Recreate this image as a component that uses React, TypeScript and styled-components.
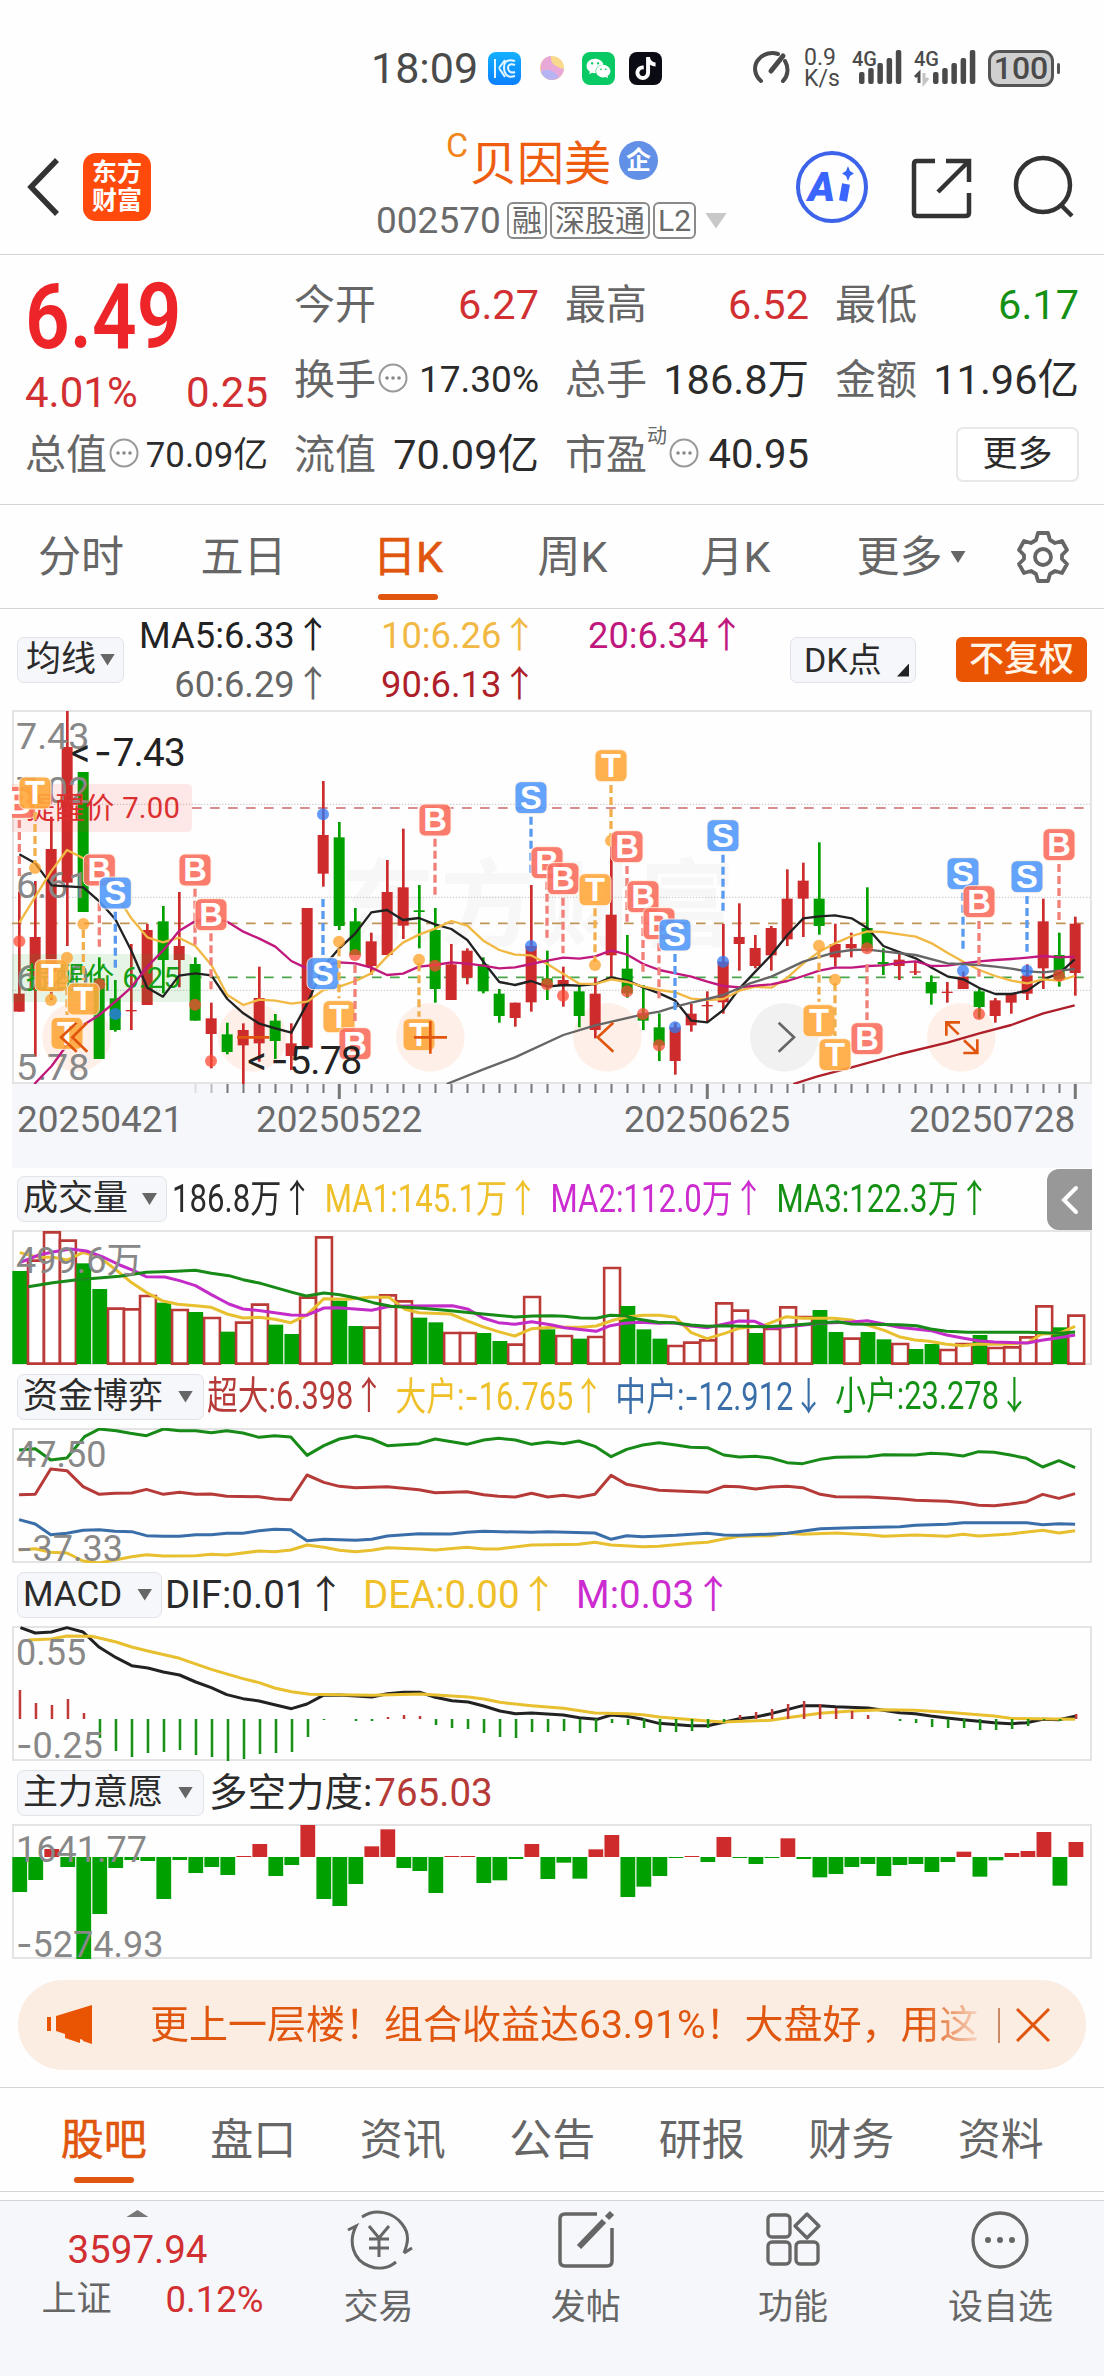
import React from "react";
import styled, { createGlobalStyle } from "styled-components";
import { FaTiktok, FaWeixin } from "react-icons/fa";

const RED = "#ce2c2c";
const GREEN = "#00a000";
const ORANGE = "#e0560f";
const FONT = 'Roboto, "Noto Sans CJK SC", sans-serif';

type Candle = [string, number, number, number, number];

// kind, high, body top, body bottom, low
const candles: Candle[] = [
  ["r", 575, 881, 935, 935],
  ["r", 543, 711, 870, 1070],
  ["r", 350, 447, 815, 900],
  ["r", 33, 141, 548, 738],
  ["g", 216, 216, 636, 636],
  ["g", 772, 835, 1077, 1077],
  ["g", 840, 895, 990, 995],
  ["r", 732, 930, 934, 990],
  ["r", 672, 690, 915, 915],
  ["g", 618, 664, 780, 880],
  ["r", 576, 738, 780, 862],
  ["g", 772, 792, 962, 962],
  ["r", 908, 955, 1002, 1105],
  ["g", 968, 1003, 1056, 1063],
  ["r", 970, 990, 1036, 1152],
  ["r", 800, 894, 1030, 1085],
  ["g", 942, 962, 1023, 1077],
  ["r", 970, 1030, 1068, 1110],
  ["r", 624, 624, 1043, 1043],
  ["r", 243, 405, 521, 560],
  ["g", 366, 412, 678, 690],
  ["g", 624, 664, 765, 765],
  ["r", 698, 724, 798, 825],
  ["r", 480, 576, 765, 765],
  ["r", 386, 562, 677, 717],
  ["g", 555, 631, 636, 745],
  ["g", 624, 690, 867, 908],
  ["r", 732, 793, 900, 900],
  ["r", 745, 752, 833, 853],
  ["g", 772, 793, 874, 880],
  ["g", 867, 881, 948, 968],
  ["r", 908, 908, 954, 980],
  ["r", 555, 738, 907, 935],
  ["g", 752, 835, 855, 900],
  ["r", 800, 840, 857, 920],
  ["g", 855, 874, 948, 982],
  ["r", 833, 881, 990, 1015],
  ["r", 440, 644, 766, 830],
  ["g", 705, 806, 880, 893],
  ["g", 855, 940, 962, 990],
  ["g", 940, 982, 1036, 1083],
  ["r", 968, 982, 1083, 1124],
  ["r", 912, 941, 976, 995],
  ["r", 874, 915, 919, 965],
  ["r", 672, 785, 907, 941],
  ["r", 610, 711, 732, 812],
  ["r", 705, 744, 798, 805],
  ["r", 678, 684, 766, 812],
  ["r", 508, 596, 718, 738],
  ["r", 488, 542, 596, 711],
  ["g", 427, 596, 678, 704],
  ["r", 671, 732, 772, 800],
  ["r", 698, 732, 745, 772],
  ["g", 562, 684, 745, 755],
  ["g", 745, 786, 793, 825],
  ["r", 760, 779, 798, 840],
  ["r", 785, 814, 818, 825],
  ["g", 826, 846, 880, 914],
  ["r", 846, 875, 879, 908],
  ["r", 815, 830, 867, 867],
  ["g", 867, 874, 921, 955],
  ["r", 894, 901, 948, 968],
  ["r", 881, 881, 908, 941],
  ["r", 793, 826, 881, 900],
  ["r", 596, 664, 805, 867],
  ["g", 698, 765, 840, 860],
  ["r", 650, 671, 819, 887],
];

const maLines = [
  {
    color: "#222",
    points:
      "58,463 106,490 155,556 250,562 298,604 346,658 394,752 442,863 489,890 537,827 586,820 634,826 682,897 730,940 778,971 826,985 874,998 922,910 970,800 1018,745 1066,700 1114,637 1161,630 1209,660 1257,654 1305,673 1354,687 1402,720 1450,785 1498,846 1545,855 1593,843 1642,860 1690,855 1738,857 1786,852 1834,832 1882,842 1930,862 1978,880 2026,902 2074,962 2122,967 2170,930 2218,866 2266,815 2314,765 2362,705 2410,655 2458,649 2505,646 2555,655 2603,685 2650,738 2700,757 2747,775 2795,803 2842,829 2890,838 2938,864 2986,882 3034,882 3082,872 3130,838 3178,820 3224,778",
  },
  {
    color: "#f1b843",
    points:
      "58,668 106,590 153,515 201,450 250,475 298,530 346,580 394,655 442,712 489,727 537,713 586,738 634,795 682,885 730,915 778,899 826,902 874,911 922,905 970,870 1018,860 1066,843 1114,820 1161,770 1209,728 1257,704 1305,686 1354,663 1402,677 1450,722 1498,750 1545,764 1593,766 1642,792 1690,822 1738,851 1786,852 1834,838 1882,846 1930,860 1978,870 2026,877 2074,896 2122,900 2170,897 2218,872 2266,860 2314,863 2362,833 2410,790 2458,755 2505,730 2555,708 2603,694 2650,696 2700,703 2747,710 2795,730 2842,758 2890,785 2938,810 2986,828 3034,842 3082,850 3130,838 3178,842 3224,828",
  },
  {
    color: "#c0187c",
    points:
      "103,1152 155,1098 201,1035 250,975 298,945 346,905 394,862 442,800 489,752 537,693 586,663 634,655 682,665 730,695 778,716 826,740 874,783 922,806 970,797 1018,787 1066,790 1114,803 1161,825 1209,821 1257,800 1305,795 1354,787 1402,791 1450,797 1498,805 1545,802 1593,792 1642,782 1690,773 1738,776 1786,769 1834,751 1882,764 1930,792 1978,810 2026,820 2074,830 2122,845 2170,858 2220,862 2266,857 2314,853 2362,843 2410,828 2458,812 2505,803 2555,803 2603,798 2650,796 2700,788 2747,784 2795,798 2842,797 2890,790 2938,784 2986,780 3034,777 3082,773 3130,768 3178,772 3224,770",
  },
  {
    color: "#666",
    points:
      "1340,1152 1450,1108 1545,1072 1690,1005 1786,976 1930,943 1978,935 2026,920 2074,908 2122,897 2170,885 2250,850 2314,830 2410,785 2505,757 2555,750 2603,749 2650,754 2747,765 2842,790 2938,795 2986,800 3034,806 3082,814 3130,817 3178,812 3224,807",
  },
  {
    color: "#ae1f2a",
    points:
      "2380,1152 2450,1130 2555,1102 2700,1062 2842,1028 2938,1000 3034,975 3130,940 3224,916",
  },
];

type Mark = {
  kind: "B" | "S" | "T";
  x: number;
  y: number;
  from: number;
  to: number;
  dot: number;
};

const m = (
  kind: Mark["kind"],
  x: number,
  y: number,
  from: number,
  to: number,
  dot: number
): Mark => ({ kind, x, y, from, to, dot });

const marks: Mark[] = [
  m("B", 58, 307, 360, 530, 724),
  m("T", 105, 279, 336, 490, 504),
  m("B", 298, 510, 610, 740, 853),
  m("S", 346, 579, 635, 805, 942),
  m("T", 153, 827, 880, 895, 900),
  m("T", 201, 1000, 790, 945, 773),
  m("T", 250, 897, 690, 840, 672),
  m("B", 585, 510, 566, 735, 914),
  m("B", 633, 644, 700, 870, 1083),
  m("S", 969, 821, 597, 765, 343),
  m("T", 1017, 950, 745, 895, 725),
  m("B", 1065, 1031, 795, 975, 765),
  m("B", 1305, 360, 416, 585, 797),
  m("T", 1257, 1004, 790, 950, 779),
  m("S", 1593, 293, 350, 520, 738),
  m("B", 1641, 488, 545, 715, 853),
  m("B", 1689, 536, 593, 760, 887),
  m("T", 1785, 569, 625, 785, 795),
  m("T", 1833, 197, 255, 410, 422),
  m("B", 1881, 440, 498, 665, 874),
  m("B", 1929, 590, 648, 815, 942),
  m("B", 1977, 671, 730, 895, 1036),
  m("S", 2025, 705, 762, 930, 982),
  m("S", 2169, 407, 464, 632, 785),
  m("T", 2457, 962, 752, 905, 737),
  m("T", 2505, 1064, 850, 1008, 839),
  m("B", 2601, 1016, 793, 960, 745),
  m("S", 2889, 521, 578, 747, 812),
  m("B", 2937, 605, 663, 830, 942),
  m("S", 3081, 530, 588, 755, 812),
  m("B", 3177, 434, 492, 660, 827),
];

const markFill = { B: "#fa6f60", S: "#549afb", T: "#ffa93c" };
const stemFill = { B: "#f08078", S: "#5a9bf0", T: "#f0b050" };
const dotFill = { B: "#fb4a36", S: "#2f78f5", T: "#ff9f24" };

const toBars = (s: string): [string, number][] =>
  s.split(" ").map((v) => [v[0], Number(v.slice(1))]);

const volumeBars = toBars(
  "g633 r600 r515 r540 g610 g687 r744 r746 r706 g728 r748 g756 r772 g815 r786 r732 g794 g822 r711 r530 g722 g798 r801 r704 r722 g773 g787 r817 r817 g819 g843 r852 r709 g808 r826 g836 r829 r622 g738 g808 g836 r856 r846 r839 r728 r750 g819 r805 r740 r769 g750 g816 r834 g816 g838 r850 g867 g852 r868 r850 g825 r862 r860 r830 r737 g802 r765"
);

const macdBars = toBars(
  "r390 r429 r435 r417 r459 g534 g573 g591 g579 g576 g570 g585 g591 g603 g597 g582 g579 g576 g531 g480 g477 g483 g483 r471 r465 r468 g495 g504 g507 g519 g531 g534 g516 g516 g513 g519 g516 g489 g495 g504 g516 g516 g513 g504 g486 r465 r456 r447 r432 r423 r432 r444 r453 r465 g477 g483 g489 g501 g504 g504 g510 g510 g507 g498 g480 g483 r462"
);

const forceBars = toBars(
  "g396 g360 r267 g321 g597 g462 g324 g300 g303 g417 g300 g339 g321 g345 r288 r252 g348 g315 r195 g417 g438 g372 r259 r208 g324 g333 g399 r288 r288 g369 g361 g297 r252 g357 g308 g356 r268 r225 g411 g380 g348 g294 r288 g306 r231 g294 g312 g294 r235 g297 g352 g342 g321 g312 g348 g315 g312 g336 g306 r275 g350 g301 r279 r273 r216 g377 r246"
);

const volumeLines = [
  {
    color: "#e8bf2f",
    points:
      "56,578 110,592 150,592 190,600 235,578 280,590 330,630 370,665 415,697 460,722 505,733 555,737 600,742 645,762 690,774 735,772 780,778 826,788 870,766 920,716 985,718 1050,712 1105,712 1150,748 1190,758 1280,762 1325,782 1370,800 1415,815 1462,828 1510,806 1568,802 1648,802 1693,798 1743,780 1783,770 1828,766 1873,766 1918,772 1963,818 2008,836 2058,820 2098,805 2168,797 2233,770 2278,775 2368,775 2418,780 2468,797 2513,812 2553,830 2598,840 2638,844 2688,853 2733,857 2778,852 2818,853 2868,852 2918,848 2958,822 3008,820 3053,799",
  },
  {
    color: "#c32cc8",
    points:
      "56,608 110,585 150,576 200,567 245,573 290,590 340,615 380,632 415,650 468,651 510,662 555,677 600,704 650,732 690,747 740,752 826,765 870,766 920,744 960,743 1055,751 1100,740 1150,738 1285,737 1330,748 1372,774 1415,788 1462,793 1510,785 1568,795 1603,803 1693,814 1733,797 1773,790 1818,787 1873,790 1913,788 1963,798 2008,803 2058,792 2098,783 2143,784 2188,805 2278,796 2328,790 2418,786 2463,782 2513,793 2553,802 2643,812 2688,825 2733,834 2778,842 2823,846 2918,849 2958,841 3008,833 3053,825",
  },
  {
    color: "#178a17",
    points:
      "80,680 150,668 220,659 340,649 415,637 500,634 555,631 600,640 650,647 690,659 740,670 830,697 870,708 920,699 965,704 1015,715 1060,728 1110,739 1200,745 1280,752 1372,762 1462,771 1515,768 1568,767 1603,769 1648,774 1693,775 1733,766 1773,767 1813,778 1868,787 1913,788 1963,795 2008,799 2058,797 2168,800 2233,797 2328,789 2378,785 2418,792 2553,794 2603,797 2643,807 2688,814 2748,817 2918,817 3008,820 3053,816",
  },
];

const fundLines = [
  {
    color: "#178a17",
    points:
      "27,240 50,236 72,270 95,264 120,200 141,177 165,182 185,190 208,197 232,177 255,182 278,182 300,188 322,182 345,189 368,202 390,197 413,201 436,256 460,227 482,207 505,198 528,207 550,227 595,221 618,207 663,223 687,210 708,205 732,210 755,223 778,216 800,221 822,213 845,229 868,260 890,238 913,225 936,218 960,225 981,232 1005,233 1028,255 1050,261 1073,259 1095,264 1118,278 1140,281 1165,268 1187,262 1233,260 1255,254 1300,255 1322,250 1345,252 1368,258 1390,245 1412,247 1435,255 1458,265 1481,291 1504,272 1527,293",
  },
  {
    color: "#b53a38",
    points:
      "27,374 50,373 72,297 95,302 118,350 141,373 163,370 187,369 208,358 232,373 255,367 278,373 300,372 322,379 368,380 390,387 413,389 436,315 460,337 482,349 505,353 550,350 595,359 618,368 663,365 687,374 708,379 732,381 755,370 778,381 800,376 822,382 845,373 868,316 890,343 913,352 936,361 1005,367 1028,349 1050,350 1073,357 1095,351 1118,349 1140,353 1165,373 1187,380 1233,381 1278,386 1300,391 1345,394 1368,398 1390,406 1412,407 1435,402 1458,395 1481,373 1504,385 1527,371",
  },
  {
    color: "#e8bf2f",
    points:
      "27,540 50,536 72,547 95,549 118,573 141,579 163,570 187,560 208,554 232,558 278,557 300,553 322,555 368,543 390,545 413,540 436,525 460,532 482,541 505,545 528,541 550,533 595,537 618,540 663,532 687,537 708,537 755,525 822,523 845,517 868,525 913,530 936,529 981,520 1005,517 1028,507 1050,499 1095,497 1118,490 1140,493 1187,489 1233,494 1255,499 1300,495 1345,499 1368,493 1390,498 1435,492 1481,481 1504,489 1527,482",
  },
  {
    color: "#3a6ea8",
    points:
      "27,449 50,462 72,494 95,490 118,481 141,479 163,484 187,485 208,497 232,499 255,499 278,494 300,494 322,490 345,490 368,482 390,478 413,479 436,512 460,508 505,511 528,508 550,498 595,491 640,492 663,487 687,484 755,487 778,485 845,489 868,508 890,497 913,500 960,496 1005,490 1028,495 1050,496 1118,490 1165,476 1210,473 1278,470 1300,466 1345,463 1368,458 1458,458 1481,464 1504,461 1527,463",
  },
];

const macdLines = [
  {
    color: "#222",
    points:
      "29,203 50,219 73,216 95,203 118,216 141,262 165,293 187,317 210,324 232,336 255,345 278,366 300,383 322,404 345,416 368,423 390,434 414,446 436,432 459,406 482,405 528,411 550,401 573,397 597,397 618,412 642,422 665,426 687,438 710,453 732,461 755,459 800,465 823,473 848,478 868,465 890,469 913,478 936,490 981,497 1005,497 1028,487 1050,476 1073,471 1095,461 1118,449 1140,437 1165,437 1187,440 1233,444 1278,458 1300,461 1322,468 1345,474 1368,479 1412,488 1435,491 1458,488 1481,478 1504,479 1527,469",
  },
  {
    color: "#e8bf2f",
    points:
      "40,240 73,237 95,228 130,229 141,234 165,246 187,261 210,273 255,295 300,328 345,356 368,368 390,384 414,395 440,403 482,404 528,406 597,402 665,411 687,417 710,427 755,437 800,445 845,459 890,461 913,464 936,471 1005,483 1028,486 1095,481 1118,473 1165,460 1210,453 1255,449 1300,451 1345,457 1412,468 1435,475 1527,478",
  },
];

const GlobalStyle = createGlobalStyle`
  * {
    box-sizing: border-box;
  }
  body {
    margin: 0;
    background: #fff;
    font-family: ${FONT};
  }
`;

const Page = styled.div`
  width: 1104px;
  height: 2376px;
  display: flex;
  flex-direction: column;
  background: #fefefe;
  color: #2b2b2b;
  white-space: nowrap;
  overflow: hidden;
`;

const StatusBar = styled.div`
  display: flex;
  align-items: center;
  height: 95px;
  padding: 41px 44px 0 371px;
  color: #4a4a4a;
`;

const Clock = styled.span`
  width: 117px;
  font-size: 43px;
  line-height: 54px;
`;

const AppTile = styled.span<{ $bg: string }>`
  display: flex;
  align-items: center;
  justify-content: center;
  width: 33px;
  height: 33px;
  margin-right: 14px;
  border-radius: 8px;
  background: ${(p) => p.$bg};
  color: #fff;
  svg {
    display: block;
  }
`;

const StatusRight = styled.div`
  display: flex;
  align-items: center;
  margin-left: auto;
`;

const NetSpeed = styled.div`
  width: 48px;
  margin-left: 13px;
  font-size: 23px;
  line-height: 21px;
`;

const Battery = styled.div`
  position: relative;
  width: 66px;
  height: 37px;
  margin-left: 12px;
  margin-right: 6px;
  border: 3px solid #555;
  border-radius: 11px;
  background: #d0d0d0;
  font-size: 32px;
  line-height: 31px;
  font-weight: 500;
  text-align: center;
  &::after {
    content: "";
    position: absolute;
    right: -9px;
    top: 10px;
    width: 3px;
    height: 11px;
    border-radius: 2px;
    background: #555;
  }
`;

const Header = styled.header`
  display: flex;
  align-items: center;
  height: 160px;
  padding: 24px 27px 0;
  border-bottom: 1px solid #d5d5d5;
`;

const LogoTile = styled.div`
  width: 68px;
  height: 68px;
  margin-left: 22px;
  padding-top: 6px;
  border-radius: 13px;
  background: #ff4a0c;
  color: #fff;
  font-size: 25px;
  font-weight: 700;
  line-height: 28px;
  text-align: center;
`;

const TitleBlock = styled.div`
  width: 375px;
  height: 134px;
  margin: -24px 0 0 225px;
  padding-top: 22px;
`;

const TitleLine = styled.div`
  display: flex;
  align-items: center;
  height: 60px;
  padding-left: 70px;
  color: #ee5c10;
  font-size: 47px;
`;

const SupC = styled.span`
  align-self: flex-start;
  width: 24px;
  margin-top: -2px;
  color: #f08519;
  font-size: 34px;
  line-height: 34px;
`;

const CompanyBadge = styled.span`
  width: 39px;
  height: 39px;
  margin: 2px 0 0 8px;
  border-radius: 50%;
  background: #6290e6;
  color: #fff;
  font-size: 25px;
  font-weight: 700;
  line-height: 40px;
  text-align: center;
`;

const CodeLine = styled.div`
  display: flex;
  align-items: center;
  height: 56px;
  margin-top: 3px;
  color: #6a6a6a;
  font-size: 37px;
  & > span:first-child {
    width: 131px;
  }
`;

const TagBox = styled.span`
  height: 37px;
  margin-right: 3px;
  padding: 0 3px;
  border: 2px solid #8a8a8a;
  border-radius: 6px;
  font-size: 30px;
  line-height: 34px;
`;

const HeaderIcons = styled.svg`
  margin: 0 2px 0 auto;
`;

const Caret = styled.i<{
  $w?: number;
  $h?: number;
  $color?: string;
  $left?: number;
  $up?: boolean;
}>`
  width: ${(p) => p.$w ?? 15}px;
  height: ${(p) => p.$h ?? 12}px;
  margin-left: ${(p) => p.$left ?? 0}px;
  background: ${(p) => p.$color ?? "#666"};
  clip-path: ${(p) =>
    p.$up
      ? "polygon(50% 0, 100% 100%, 0 100%)"
      : "polygon(0 0, 100% 0, 50% 100%)"};
`;

const QuotePanel = styled.section`
  display: grid;
  grid-template-columns: 243px 245px 244px 244px;
  grid-template-rows: repeat(3, 75px);
  column-gap: 26px;
  height: 250px;
  padding: 12px 0 0 25px;
  border-bottom: 1px solid #d5d5d5;
`;

const PriceBlock = styled.div`
  grid-row: 1 / span 2;
  color: #d12f31;
`;

const Price = styled.div`
  height: 101px;
  color: #ee2528;
  font-size: 90px;
  font-weight: 600;
  line-height: 102px;
  transform: scaleX(0.87);
  transform-origin: left;
`;

const Change = styled.div`
  display: flex;
  justify-content: space-between;
  font-size: 42px;
  line-height: 50px;
`;

const QuoteCell = styled.div`
  display: flex;
  align-items: center;
  font-size: 41px;
  line-height: 50px;
`;

const CellLabel = styled.span`
  color: #666;
`;

const CellValue = styled.span<{ $color?: string; $size?: number }>`
  margin-left: auto;
  color: ${(p) => p.$color ?? "#2b2b2b"};
  font-size: ${(p) => p.$size ?? 41.5}px;
`;

const Superscript = styled.span`
  align-self: flex-start;
  margin-top: -6px;
  color: #666;
  font-size: 20px;
`;

const MoreButton = styled.button`
  width: 123px;
  height: 55px;
  margin-left: auto;
  border: 2px solid #e8e8e8;
  border-radius: 7px;
  background: #fff;
  color: #2b2b2b;
  font-family: inherit;
  font-size: 35px;
  line-height: 46px;
`;

const PeriodTabs = styled.nav`
  display: flex;
  height: 104px;
  border-bottom: 1px solid #d5d5d5;
`;

const Tab = styled.div<{ $active?: boolean; $width: number }>`
  display: flex;
  flex-direction: column;
  align-items: center;
  width: ${(p) => p.$width}px;
  color: ${(p) => (p.$active ? ORANGE : "#666")};
  font-size: 43px;
  -webkit-text-stroke: ${(p) => (p.$active ? 0.6 : 0)}px;
  & > span {
    display: flex;
    align-items: center;
    height: 89px;
    padding-top: 15px;
    line-height: 60px;
  }
  &::after {
    content: "";
    width: 60px;
    height: 6px;
    border-radius: 3px;
    background: ${(p) => (p.$active ? ORANGE : "transparent")};
  }
`;

const MaBar = styled.div`
  display: flex;
  align-items: center;
  height: 101px;
  padding: 0 17px;
`;

const Picker = styled.div<{ $width: number; $gap?: number }>`
  display: flex;
  align-items: center;
  flex: none;
  width: ${(p) => p.$width}px;
  height: 46px;
  padding-left: ${(p) => p.$gap ?? 5}px;
  border: 1px solid #e0e3e8;
  border-radius: 7px;
  background: #f6f7fa;
  font-size: 35px;
  line-height: 44px;
`;

const MaGrid = styled.div`
  display: grid;
  grid-template-columns: 192px 157px 158px;
  grid-template-rows: 49px 49px;
  column-gap: 50px;
  width: 651px;
  margin-left: 15px;
  font-size: 36.3px;
  line-height: 50px;
`;

const MaText = styled.span<{ $color: string; $end?: boolean }>`
  color: ${(p) => p.$color};
  text-align: ${(p) => (p.$end ? "right" : "left")};
`;

const DkPicker = styled(Picker)`
  position: relative;
  padding-left: 13px;
  font-size: 34px;
  &::after {
    content: "";
    position: absolute;
    right: 6px;
    bottom: 5px;
    width: 12px;
    height: 13px;
    background: #222;
    clip-path: polygon(100% 0, 100% 100%, 0 100%);
  }
`;

const AdjustButton = styled.div`
  width: 131px;
  height: 45px;
  margin-left: 40px;
  border-radius: 6px;
  background: #ea5504;
  color: #fff4e6;
  font-size: 35px;
  font-weight: 500;
  line-height: 46px;
  text-align: center;
`;

const ChartFrame = styled.div<{ $height: number }>`
  position: relative;
  flex: none;
  width: 1080px;
  height: ${(p) => p.$height}px;
  margin-left: 12px;
  box-shadow: inset 0 0 0 2px #e4e4e4;
  & > svg {
    display: block;
    width: 100%;
    height: 100%;
  }
`;

const AxisLabel = styled.span<{ $top: number }>`
  position: absolute;
  left: 4px;
  top: ${(p) => p.$top}px;
  color: #888;
  font-size: 36px;
  line-height: 40px;
`;

// wide dash in front of negative values
const Minus = styled.span`
  font-family: Inter, sans-serif;
`;

const DateAxis = styled.div`
  flex: none;
  width: 1080px;
  height: 84px;
  margin-left: 12px;
  background: #f6f7fa;
  svg {
    display: block;
  }
`;

const Dates = styled.div`
  display: flex;
  padding-left: 5px;
  color: #6b6b6b;
  font-size: 37px;
  line-height: 41px;
`;

const DateText = styled.span<{ $width: number }>`
  width: ${(p) => p.$width}px;
`;

const IndicatorBar = styled.div<{ $height?: number }>`
  display: flex;
  align-items: center;
  flex: none;
  height: ${(p) => p.$height ?? 63}px;
  padding-left: 17px;
`;

const Readings = styled.div<{ $left: number; $squeeze?: number; $gap: number }>`
  display: flex;
  flex: none;
  gap: ${(p) => p.$gap}px;
  margin-left: ${(p) => p.$left}px;
  font-size: 38.5px;
  line-height: 50px;
  transform: scaleX(${(p) => p.$squeeze ?? 1});
  transform-origin: left;
`;

const Reading = styled.span<{ $color?: string }>`
  color: ${(p) => p.$color ?? "#2b2b2b"};
`;

const SideHandle = styled.div`
  position: absolute;
  right: 0;
  top: -61px;
  display: flex;
  align-items: center;
  justify-content: center;
  width: 45px;
  height: 61px;
  border-radius: 12px 0 0 12px;
  background: #989898;
`;

const Promo = styled.div`
  display: flex;
  align-items: center;
  flex: none;
  height: 90px;
  margin: 21px 18px 17px;
  padding-left: 29px;
  border-radius: 45px;
  background: #fcede3;
  color: #e0560f;
`;

const PromoText = styled.div`
  width: 829px;
  margin-left: 57px;
  overflow: hidden;
  font-size: 39px;
  line-height: 60px;
  mask-image: linear-gradient(to right, #000 93%, rgba(0, 0, 0, 0.15));
`;

const PromoRule = styled.i`
  width: 2px;
  height: 35px;
  margin: 0 16px 0 19px;
  background: #c98a64;
`;

const InfoTabs = styled.nav`
  display: flex;
  flex: none;
  height: 105px;
  padding-left: 29px;
  border-top: 1px solid #d5d5d5;
  border-bottom: 1px solid #d5d5d5;
`;

const BottomBar = styled.footer`
  display: flex;
  flex: 1;
  margin-top: 8px;
  border-top: 1px solid #d0d3d7;
  background: #f6f7fa;
  color: #666;
`;

const IndexBox = styled.div`
  display: flex;
  flex-direction: column;
  align-items: center;
  width: 275px;
  padding-top: 9px;
  color: #d12f31;
  font-size: 38.5px;
  line-height: 66px;
`;

const IndexRow = styled.div`
  display: flex;
  justify-content: space-between;
  width: 222px;
  margin: -16px 0 0 30px;
  font-size: 36.5px;
  span:first-child {
    color: #666;
    font-size: 35px;
  }
`;

const Action = styled.div`
  display: flex;
  flex-direction: column;
  align-items: center;
  width: 207.3px;
  padding-top: 8px;
  font-size: 35px;
  line-height: 40px;
  svg {
    display: block;
    margin-bottom: 17px;
  }
`;

const InfoDots = () => (
  <svg width="32" height="34" viewBox="0 0 32 34">
    <circle cx="17" cy="15" r="13.5" fill="none" stroke="#999" strokeWidth="2" />
    {[11, 17, 23].map((x) => (
      <circle key={x} cx={x} cy="15" r="1.8" fill="#888" />
    ))}
  </svg>
);

const Signal = ({ dual }: { dual?: boolean }) => (
  <svg width="62" height="40" viewBox="0 0 62 40">
    <text x="0" y="18" fontSize="21" fontFamily="Roboto" fontWeight="500" fill="#4a4a4a" textLength="25" lengthAdjust="spacingAndGlyphs">
      4G
    </text>
    {[0, 1, 2, 3, 4].map((i) => {
      const top = [24, 20, 15, 10, 2][i];
      return (
        <rect key={i} x={(dual ? 19 : 7) + i * 9.2} y={top} width="5.5" height={36 - top} rx="2" fill="#4a4a4a" />
      );
    })}
    {dual && (
      <g>
        <path d="M1 29L5 25V35" fill="none" stroke="#4a4a4a" strokeWidth="3" />
        <path d="M10 25V35L14 30" fill="none" stroke="#c4c4c4" strokeWidth="3" />
      </g>
    )}
  </svg>
);

type Line = { color: string; points: string };

const Lines = ({ lines }: { lines: Line[] }) => (
  <>
    {lines.map((l) => (
      <polyline
        key={l.color}
        points={l.points}
        fill="none"
        stroke={l.color}
        strokeWidth="3"
        strokeLinejoin="round"
        vectorEffect="non-scaling-stroke"
      />
    ))}
  </>
);

// Drawn in thirds of a pixel, one candle every 48 units
const PriceChart = () => (
  <svg viewBox="36 30 3240 1122" fontFamily={FONT}>
    <text x="1020" y="716" fontSize="285" fontWeight="700" fill="#f7f7f7" letterSpacing="15">
      东方财富
    </text>
    {[313, 592, 871].map((y) => (
      <line key={y} x1="36" x2="3270" y1={y} y2={y} stroke="#c4c4c4" strokeWidth="3" strokeDasharray="4 5" />
    ))}
    <g strokeWidth="5" strokeDasharray="29 25">
      <line x1="576" x2="3255" y1="324" y2="324" stroke="#cc6a6a" />
      <line x1="36" x2="3255" y1="670" y2="670" stroke="#c09458" />
      <line x1="576" x2="3255" y1="832" y2="832" stroke="#4aa64a" />
    </g>
    {[230, 757, 1291, 1822, 2353, 2884].map((x) => (
      <circle key={x} cx={x} cy="1012" r="103" fill={x === 2353 ? "#f1f1f1" : "#fef0e8"} />
    ))}
    {candles.map(([kind, high, top, bottom, low], i) => {
      const x = 58 + 48 * i;
      return (
        <g key={i} fill={kind === "r" ? RED : GREEN}>
          <rect x={x - 4} y={high} width="8" height={low - high} />
          <rect x={x - 17} y={top} width="33" height={bottom - top} />
        </g>
      );
    })}
    <g fontSize="113" fill="#888">
      <text x="48" y="147">7.43</text>
      <text x="48" y="309">7.02</text>
      <text x="48" y="594">6.61</text>
      <text x="48" y="872">6.20</text>
      <text x="48" y="1139">5.78</text>
    </g>
    <rect x="20" y="252" width="556" height="144" rx="14" fill="#ff3030" opacity="0.11" />
    <rect x="20" y="762" width="556" height="144" rx="14" fill="#22a022" opacity="0.11" />
    <g fontSize="88">
      <text x="78" y="353" fill="#dc2f2f" textLength="462">提醒价 7.00</text>
      <text x="78" y="863" fill="#14a014" textLength="462">提醒价 6.25</text>
    </g>
    {maLines.map((l) => (
      <polyline key={l.color} points={l.points} fill="none" stroke={l.color} strokeWidth="7" strokeLinejoin="round" />
    ))}
    {marks.map((k) => (
      <g key={k.kind + k.x}>
        <line x1={k.x} x2={k.x} y1={k.from} y2={k.to} stroke={stemFill[k.kind]} strokeWidth="10" strokeDasharray="24 12" />
        <circle cx={k.x} cy={k.dot} r="18" fill={dotFill[k.kind]} opacity="0.75" />
        <rect x={k.x - 48} y={k.y - 48} width="96" height="96" rx="18" fill={markFill[k.kind]} stroke="#fff0e0" strokeWidth="3" opacity="0.9" />
        <text x={k.x} y={k.y + 34} textAnchor="middle" fontFamily="Liberation Sans" fontSize="98" fontWeight="700" fill="#fff">
          {k.kind}
        </text>
      </g>
    ))}
    <g fontSize="116" fill="#222">
      <text x="212" y="199">&lt;</text>
      <text x="282" y="199" fontFamily="Inter">-</text>
      <text x="338" y="199" textLength="219">7.43</text>
      <text x="742" y="1123">&lt;</text>
      <text x="812" y="1123" fontFamily="Inter">-</text>
      <text x="868" y="1123" textLength="219">5.78</text>
    </g>
    <g fill="none" stroke={ORANGE} strokeWidth="8">
      <path d="M230 968L183 1012L230 1055M262 968L217 1012L262 1055" />
      <path d="M711 1012H808M1242 1012H1341M1291 963V1061" />
      <path d="M1840 968L1793 1012L1840 1055" />
      <path d="M2336 968L2382 1012L2336 1055" stroke="#666" />
      <path d="M2880 967H2839V1007M2839 967L2876 1003M2932 1018V1059H2890M2932 1059L2892 1021" />
    </g>
  </svg>
);

const VolumeChart = () => (
  <svg viewBox="34 510 3067 405" preserveAspectRatio="none">
    {volumeBars.map(([kind, top], i) => {
      const x = 56 + 45.45 * i;
      return kind === "g" ? (
        <rect key={i} x={x - 21} y={top} width="42" height={912 - top} fill={GREEN} />
      ) : (
        <rect
          key={i}
          x={x - 22}
          y={top + 2}
          width="45"
          height={909 - top}
          fill="#fff"
          stroke="#ba3a37"
          strokeWidth="2.6"
          vectorEffect="non-scaling-stroke"
        />
      );
    })}
    <Lines lines={volumeLines} />
  </svg>
);

const FundChart = () => (
  <svg viewBox="17 174 1534 405" preserveAspectRatio="none">
    <Lines lines={fundLines} />
  </svg>
);

const MacdChart = () => (
  <svg viewBox="17 198 1534 405" preserveAspectRatio="none">
    <Lines lines={macdLines} />
    {macdBars.map(([kind, end], i) => (
      <rect
        key={i}
        x={26.5 + 22.73 * i}
        y={Math.min(477, end)}
        width="3.6"
        height={Math.abs(end - 477)}
        fill={kind === "r" ? "#c03a3a" : "#179217"}
      />
    ))}
  </svg>
);

const ForceChart = () => (
  <svg viewBox="17 192 1534 405" preserveAspectRatio="none">
    {forceBars.map(([kind, end], i) => (
      <rect
        key={i}
        x={17.5 + 22.73 * i}
        y={Math.min(291, end)}
        width="21"
        height={Math.abs(end - 291)}
        fill={kind === "r" ? RED : GREEN}
      />
    ))}
  </svg>
);

const Gear = () => (
  <svg width="54" height="54" viewBox="0 0 54 54" fill="none" stroke="#666" strokeWidth="3.8" strokeLinejoin="round">
    <path d="M22 3H32L34 10L39 13L46 11L51 20L46 25V29L51 34L46 43L39 41L34 44L32 51H22L20 44L15 41L8 43L3 34L8 29V25L3 20L8 11L15 13L20 10Z" />
    <circle cx="27" cy="27" r="8" />
  </svg>
);

const infoTabs = ["股吧", "盘口", "资讯", "公告", "研报", "财务", "资料"];

const App = () => {
  return (
    <Page>
      <GlobalStyle />
      <StatusBar>
        <Clock>18:09</Clock>
        <AppTile $bg="linear-gradient(#14b0ff, #0a80ff)">
          <svg width="25" height="21" viewBox="0 0 25 21" fill="none" stroke="#e4f6ff" strokeWidth="2">
            <path d="M3 1V20M7 10L13 2M7 10L13 19M23 3C13 0 12 6 12 10S14 21 23 18M23 7C17 5 16 8 16 10S18 16 23 14" />
          </svg>
        </AppTile>
        <AppTile $bg="transparent">
          <svg width="26" height="26" viewBox="0 0 26 26">
            <circle cx="13" cy="13" r="12" fill="#f9d98c" />
            <path d="M2 9C4 3 9 1 12 1C11 8 16 12 25 14C24 22 17 25 13 25C6 25 0 19 2 9Z" fill="#e9a9d8" />
            <path d="M2 17C8 12 15 16 20 22C14 27 5 25 2 17Z" fill="#b7b4f4" />
          </svg>
        </AppTile>
        <AppTile $bg="#08c964">
          <FaWeixin size={25} />
        </AppTile>
        <AppTile $bg="#0b0b14">
          <FaTiktok size={23} />
        </AppTile>
        <StatusRight>
          <svg width="38" height="36" viewBox="0 0 38 36" fill="none" stroke="#4a4a4a" strokeWidth="4" strokeLinecap="round">
            <path d="M8 31C1 25 0 15 6 9C11 3 19 2 25 4M32 11C36 18 35 26 30 31" />
            <path d="M18 21L30 6" strokeWidth="5" />
          </svg>
          <NetSpeed>
            0.9
            <br />
            K/s
          </NetSpeed>
          <Signal />
          <Signal dual />
          <Battery>100</Battery>
        </StatusRight>
      </StatusBar>

      <Header>
        <svg width="34" height="58" viewBox="0 0 34 58" fill="none" stroke="#333" strokeWidth="5.5">
          <path d="M30 2L4 29L30 56" />
        </svg>
        <LogoTile>
          东方
          <br />
          财富
        </LogoTile>
        <TitleBlock>
          <TitleLine>
            <SupC>C</SupC>
            贝因美
            <CompanyBadge>企</CompanyBadge>
          </TitleLine>
          <CodeLine>
            <span>002570</span>
            <TagBox>融</TagBox>
            <TagBox>深股通</TagBox>
            <TagBox>L2</TagBox>
            <Caret $w={22} $h={16} $color="#c8c8c8" $left={6} />
          </CodeLine>
        </TitleBlock>
        <HeaderIcons width="280" height="76" viewBox="0 0 280 76" fill="none">
          <circle cx="37" cy="38" r="34" stroke="#3c63ea" strokeWidth="4" />
          <text x="13" y="52" fontFamily="Roboto" fontSize="41" fontWeight="900" fontStyle="italic" fill="#3a66ff">
            A
          </text>
          <path d="M51 35L48 52" stroke="#3a66ff" strokeWidth="8" />
          <path d="M53 17L55 22L59 24.5L55 27L53 32L51 27L47 24.5L51 22Z" fill="#3a66ff" />
          <g stroke="#333" strokeWidth="4.5">
            <path d="M140 12H122Q119 12 119 15V64Q119 67 122 67H170Q174 67 174 64V44" />
            <path d="M151 12H174V33M174 12L143 43" />
            <circle cx="248" cy="36" r="27" />
            <path d="M266 56L277 67" />
          </g>
        </HeaderIcons>
      </Header>

      <QuotePanel>
        <PriceBlock>
          <Price>6.49</Price>
          <Change>
            <span>4.01%</span>
            <span>0.25</span>
          </Change>
        </PriceBlock>
        <QuoteCell>
          <CellLabel>今开</CellLabel>
          <CellValue $color="#d12f31">6.27</CellValue>
        </QuoteCell>
        <QuoteCell>
          <CellLabel>最高</CellLabel>
          <CellValue $color="#d12f31">6.52</CellValue>
        </QuoteCell>
        <QuoteCell>
          <CellLabel>最低</CellLabel>
          <CellValue $color="#149114">6.17</CellValue>
        </QuoteCell>
        <QuoteCell>
          <CellLabel>换手</CellLabel>
          <InfoDots />
          <CellValue $size={37}>17.30%</CellValue>
        </QuoteCell>
        <QuoteCell>
          <CellLabel>总手</CellLabel>
          <CellValue>186.8万</CellValue>
        </QuoteCell>
        <QuoteCell>
          <CellLabel>金额</CellLabel>
          <CellValue>11.96亿</CellValue>
        </QuoteCell>
        <QuoteCell>
          <CellLabel>总值</CellLabel>
          <InfoDots />
          <CellValue $size={34.8}>70.09亿</CellValue>
        </QuoteCell>
        <QuoteCell>
          <CellLabel>流值</CellLabel>
          <CellValue>70.09亿</CellValue>
        </QuoteCell>
        <QuoteCell>
          <CellLabel>市盈</CellLabel>
          <Superscript>动</Superscript>
          <InfoDots />
          <CellValue $size={40}>40.95</CellValue>
        </QuoteCell>
        <QuoteCell>
          <MoreButton>更多</MoreButton>
        </QuoteCell>
      </QuotePanel>

      <PeriodTabs>
        <Tab $width={162}><span>分时</span></Tab>
        <Tab $width={163}><span>五日</span></Tab>
        <Tab $width={166} $active><span>日K</span></Tab>
        <Tab $width={163}><span>周K</span></Tab>
        <Tab $width={163}><span>月K</span></Tab>
        <Tab $width={188}>
          <span>
            更多
            <Caret $left={8} />
          </span>
        </Tab>
        <Tab $width={76}>
          <span>
            <Gear />
          </span>
        </Tab>
      </PeriodTabs>

      <MaBar>
        <Picker $width={107} $gap={8}>
          均线
          <Caret $left={4} />
        </Picker>
        <MaGrid>
          <MaText $color="#222" $end>MA5:6.33↑</MaText>
          <MaText $color="#f1b843">10:6.26↑</MaText>
          <MaText $color="#c0187c">20:6.34↑</MaText>
          <MaText $color="#666" $end>60:6.29↑</MaText>
          <MaText $color="#ae1f2a">90:6.13↑</MaText>
        </MaGrid>
        <DkPicker $width={126}>DK点</DkPicker>
        <AdjustButton>不复权</AdjustButton>
      </MaBar>

      <ChartFrame $height={374}>
        <PriceChart />
      </ChartFrame>
      <DateAxis>
        <svg width="1080" height="15">
          {candles.map((_, i) => {
            const major = i === 20 || i === 43 || i === 66;
            return i < 11 ? null : (
              <rect
                key={i}
                x={(major ? 5.8 : 6.5) + 16 * i}
                y="0"
                width={major ? 3 : 2}
                height={major ? 15 : 9}
                fill={i < 12 ? "#ddd" : i < 13 ? "#bbb" : "#777"}
              />
            );
          })}
        </svg>
        <Dates>
          <DateText $width={239}>20250421</DateText>
          <DateText $width={368}>20250522</DateText>
          <DateText $width={285}>20250625</DateText>
          <DateText $width={170}>20250728</DateText>
        </Dates>
      </DateAxis>

      <IndicatorBar $height={62}>
        <Picker $width={150}>
          成交量
          <Caret $left={14} />
        </Picker>
        <Readings $left={5} $squeeze={0.81} $gap={15}>
          <Reading>186.8万↑</Reading>
          <Reading $color="#efc02a">MA1:145.1万↑</Reading>
          <Reading $color="#cc2ccf">MA2:112.0万↑</Reading>
          <Reading $color="#149114">MA3:122.3万↑</Reading>
        </Readings>
      </IndicatorBar>
      <ChartFrame $height={135}>
        <VolumeChart />
        <AxisLabel $top={11}>499.6万</AxisLabel>
        <SideHandle>
          <svg width="20" height="32" viewBox="0 0 20 32" fill="none" stroke="#fff" strokeWidth="4" strokeLinecap="round">
            <path d="M16 4L4 16L16 28" />
          </svg>
        </SideHandle>
      </ChartFrame>

      <IndicatorBar>
        <Picker $width={187}>
          资金博弈
          <Caret $left={15} />
        </Picker>
        <Readings $left={3} $squeeze={0.8} $gap={14}>
          <Reading $color="#b53a38">超大:6.398↑</Reading>
          <Reading $color="#efc02a">
            大户:<Minus>-</Minus>16.765↑
          </Reading>
          <Reading $color="#3a6ea8">
            中户:<Minus>-</Minus>12.912↓
          </Reading>
          <Reading $color="#149114">小户:23.278↓</Reading>
        </Readings>
      </IndicatorBar>
      <ChartFrame $height={135}>
        <FundChart />
        <AxisLabel $top={7}>47.50</AxisLabel>
        <AxisLabel $top={100}>
          <Minus>-</Minus>37.33
        </AxisLabel>
      </ChartFrame>

      <IndicatorBar>
        <Picker $width={145}>
          MACD
          <Caret $left={15} />
        </Picker>
        <Readings $left={3} $gap={18}>
          <Reading>DIF:0.01↑</Reading>
          <Reading $color="#efc02a">DEA:0.00↑</Reading>
          <Reading $color="#cc2ccf">M:0.03↑</Reading>
        </Readings>
      </IndicatorBar>
      <ChartFrame $height={135}>
        <MacdChart />
        <AxisLabel $top={7}>0.55</AxisLabel>
        <AxisLabel $top={99}>
          <Minus>-</Minus>0.25
        </AxisLabel>
      </ChartFrame>

      <IndicatorBar>
        <Picker $width={187}>
          主力意愿
          <Caret $left={15} />
        </Picker>
        <Readings $left={5} $gap={2}>
          <Reading>多空力度:</Reading>
          <Reading $color="#b53a38">765.03</Reading>
        </Readings>
      </IndicatorBar>
      <ChartFrame $height={135}>
        <ForceChart />
        <AxisLabel $top={6}>1641.77</AxisLabel>
        <AxisLabel $top={100}>
          <Minus>-</Minus>5274.93
        </AxisLabel>
      </ChartFrame>

      <Promo>
        <svg width="46" height="40" viewBox="0 0 46 40" fill="#ea5504">
          <path d="M0 12H4V26H0ZM9 11L45 0V39L36 36V35L33 34V38L18 33V29L9 26Z" />
        </svg>
        <PromoText>更上一层楼！组合收益达63.91%！大盘好，用这</PromoText>
        <PromoRule />
        <svg width="34" height="34" viewBox="0 0 34 34" stroke="#e0560f" strokeWidth="3">
          <path d="M1 1L33 33M33 1L1 33" />
        </svg>
      </Promo>

      <InfoTabs>
        {infoTabs.map((name, i) => (
          <Tab key={name} $width={149.5} $active={i === 0}>
            <span>{name}</span>
          </Tab>
        ))}
      </InfoTabs>

      <BottomBar>
        <IndexBox>
          <Caret $up $w={22} $h={7} $color="#777" />
          3597.94
          <IndexRow>
            <span>上证</span>
            <span>0.12%</span>
          </IndexRow>
        </IndexBox>
        <Action>
          <svg width="68" height="62" viewBox="0 0 68 62" fill="none" stroke="#666" strokeWidth="3">
            <path d="M17 8C30 -1 48 3 57 15C65 25 63 34 59 44M3 21L11 17C3 33 8 51 24 57C34 61 44 59 51 53" />
            <path d="M59 44L67 39" />
            <path d="M24 17L34 29L44 17M34 29V48M24 30H44M24 39H44" />
          </svg>
          交易
        </Action>
        <Action>
          <svg width="62" height="62" viewBox="0 0 62 62" fill="none" stroke="#666" strokeWidth="3.5">
            <path d="M42 5H10Q5 5 5 10V52Q5 57 10 57H52Q57 57 57 52V19" />
            <path d="M24 38L49 12" strokeWidth="6" />
            <path d="M52 9L57 4" strokeWidth="6" />
          </svg>
          发帖
        </Action>
        <Action>
          <svg width="62" height="62" viewBox="0 0 62 62" fill="none" stroke="#666" strokeWidth="3.3">
            <rect x="6" y="6" width="22" height="22" rx="4" />
            <rect x="6" y="33" width="22" height="22" rx="4" />
            <rect x="34" y="33" width="22" height="22" rx="4" />
            <path d="M45 5L57 17L45 29L33 17Z" strokeLinejoin="round" />
          </svg>
          功能
        </Action>
        <Action>
          <svg width="62" height="62" viewBox="0 0 62 62" fill="none" stroke="#666" strokeWidth="3.3">
            <circle cx="31" cy="31" r="27" />
            {[19, 31, 43].map((x) => (
              <circle key={x} cx={x} cy="31" r="3" fill="#666" stroke="none" />
            ))}
          </svg>
          设自选
        </Action>
      </BottomBar>
    </Page>
  );
};

export default App;
